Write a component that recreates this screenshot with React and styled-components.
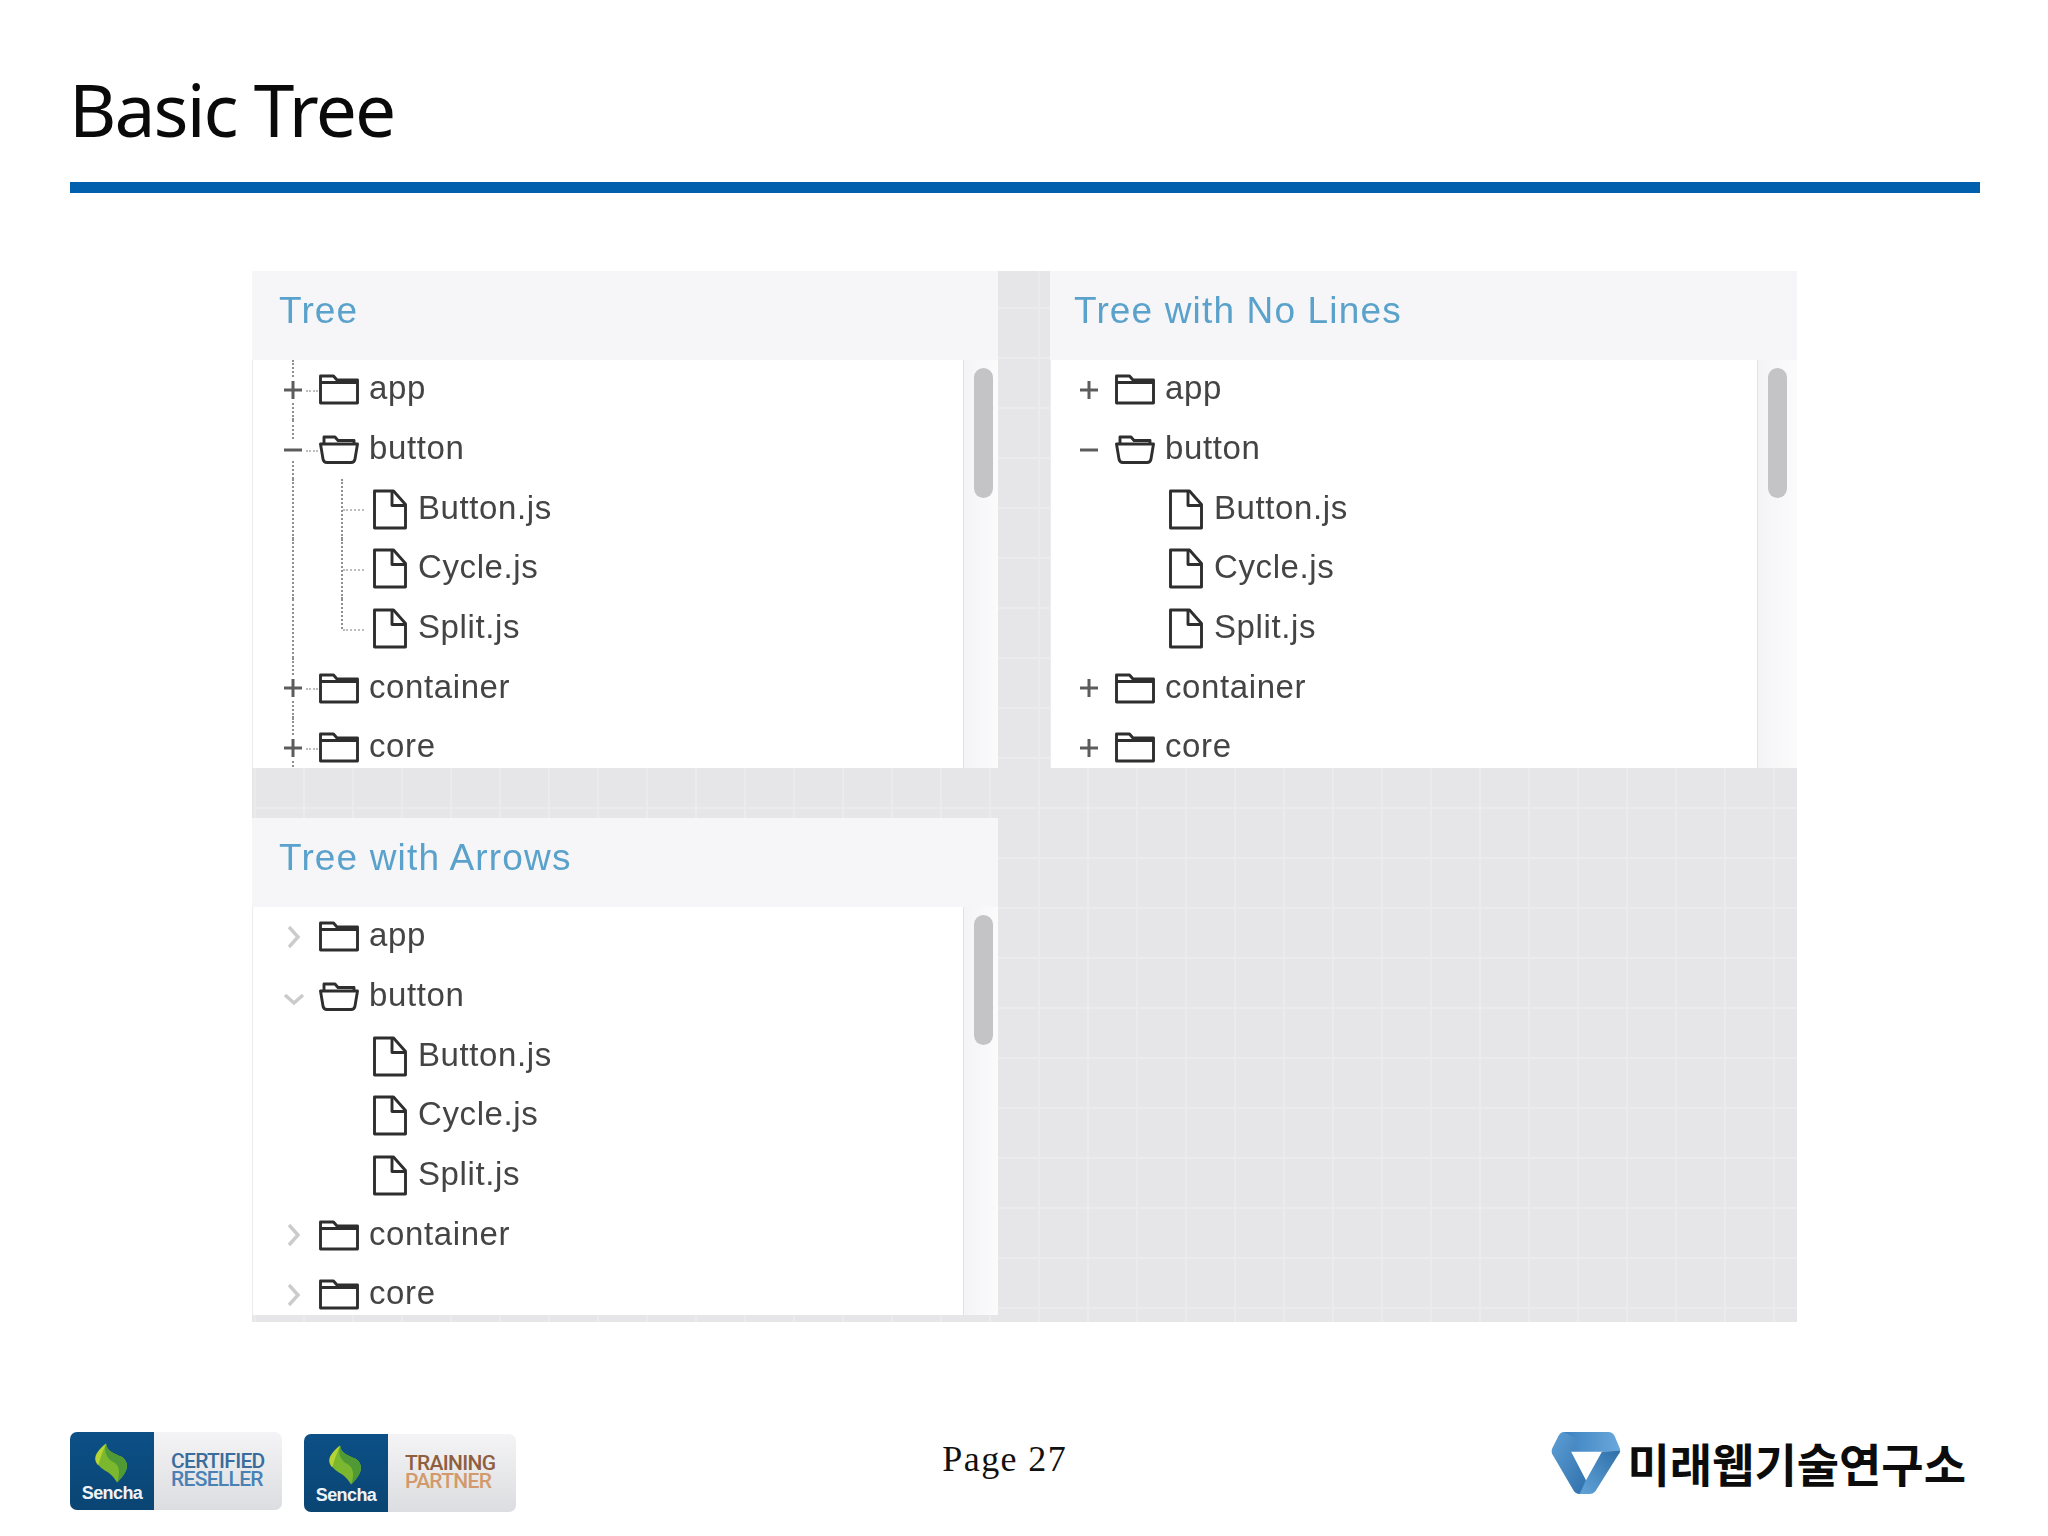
import React from "react";
import styled, { createGlobalStyle } from "styled-components";

const GlobalStyle = createGlobalStyle`
    html, body {
        margin: 0;
        padding: 0;
        background: #fff;
    }
`;

const ROW_HEIGHT = 59.7;

const nodes = [
    { name: "app", type: "folder" },
    { name: "button", type: "open" },
    { name: "Button.js", type: "file", branch: "first" },
    { name: "Cycle.js", type: "file", branch: "middle" },
    { name: "Split.js", type: "file", branch: "last" },
    { name: "container", type: "folder" },
    { name: "core", type: "folder" },
];

const FolderIcon = () => (
    <svg width="40" height="31" viewBox="0 0 40 31" fill="none" stroke="#2e2e2e" strokeWidth="2.900" strokeLinejoin="round">
        <path d="M1.500 29V2h13l3.500 4h20.500V29z" />
        <path d="M1.500 8.500h37" />
    </svg>
);

const OpenFolderIcon = () => (
    <svg width="40" height="31" viewBox="0 0 40 31" fill="none" stroke="#2e2e2e" strokeWidth="2.900" strokeLinejoin="round">
        <path d="M5 10V3h11l3 3.500h16V10" />
        <path d="M1.500 10h37l-2.500 15q-.5 3.500-4 3.500H8q-3.500 0-4-3.500z" />
    </svg>
);

const FileIcon = () => (
    <svg width="36" height="41" viewBox="0 0 36 41" fill="none" stroke="#2e2e2e" strokeWidth="2.900" strokeLinejoin="round">
        <path d="M2.500 2h19L33.500 15.500V39H2.500z" />
        <path d="M20 2v14.500h13.500" />
    </svg>
);

const Toggle = ({ variant, open }) => {
    if (variant === "arrows") {
        return (
            <svg width="24" height="26" viewBox="0 0 24 26" fill="none" stroke="#cbcbcb" strokeWidth="3.400">
                <path d={open ? "M3 11l9 8 9-8" : "M7 3l9 10-9 10"} />
            </svg>
        );
    }
    return (
        <svg width="22" height="22" viewBox="0 0 22 22" fill="none" stroke="#5c5c5c" strokeWidth="3">
            <path d="M2 11h18" />
            {!open && <path d="M11 2v18" />}
        </svg>
    );
};

const Row = ({ node, variant, indent }) => {
    const lines = variant === "lines";
    if (node.type === "file") {
        return (
            <RowBox $indent={indent}>
                <ToggleSlot $trunk={lines} />
                <BranchSlot $branch={lines ? node.branch : null} />
                <FileIcon />
                <FileName>{node.name}</FileName>
            </RowBox>
        );
    }
    const open = node.type === "open";
    return (
        <RowBox $indent={indent}>
            <ToggleSlot $trunk={lines} $stub={lines}>
                <Toggle variant={variant} open={open} />
            </ToggleSlot>
            {open ? <OpenFolderIcon /> : <FolderIcon />}
            <FolderName>{node.name}</FolderName>
        </RowBox>
    );
};

const TreePanel = ({ title, variant, indent = 20, titleInset = 27, trackWidth = 35 }) => (
    <Panel>
        <PanelHeader $inset={titleInset}>{title}</PanelHeader>
        <PanelBody>
            <TreeList>
                {nodes.map((node) => (
                    <Row key={node.name} node={node} variant={variant} indent={indent} />
                ))}
            </TreeList>
            <ScrollTrack $width={trackWidth}>
                <ScrollThumb />
            </ScrollTrack>
        </PanelBody>
    </Panel>
);

const SenchaLeaf = () => (
    <svg width="40" height="46" viewBox="0 0 40 46">
        <path d="M13 0C-2 12-2 24 12 32c8 4 11 9 14 14 12-12 16-22 6-30C24 12 14 10 13 0z" fill="#7cb82f" />
        <path d="M13 0C10 10 14 18 22 22c7 4 8 12 4 24 12-12 16-22 6-30C24 12 14 10 13 0z" fill="#4f9a35" />
        <path d="M13 0C-2 12-2 20 4 26 6 16 10 8 13 0z" fill="#b6d433" />
    </svg>
);

const Badge = ({ first, second, tone, lower }) => (
    <BadgeBox $lower={lower}>
        <BadgeBrand>
            <SenchaLeaf />
            <BadgeBrandName>Sencha</BadgeBrandName>
        </BadgeBrand>
        <BadgeLabel $tone={tone}>
            <span>{first}</span>
            <BadgeSecond $tone={tone}>{second}</BadgeSecond>
        </BadgeLabel>
    </BadgeBox>
);

const BrandMark = () => (
    <svg width="70" height="63" viewBox="0 0 66 64" preserveAspectRatio="none">
        <defs>
            <linearGradient id="markTop" x1="0" y1="0" x2="1" y2="0">
                <stop offset="0" stopColor="#3d82c0" />
                <stop offset="1" stopColor="#6aa8dc" />
            </linearGradient>
            <linearGradient id="markRight" x1="1" y1="0" x2="0" y2="1">
                <stop offset="0" stopColor="#2f6fa8" />
                <stop offset="1" stopColor="#62a4da" />
            </linearGradient>
            <linearGradient id="markLeft" x1="0" y1="0" x2="1" y2="1">
                <stop offset="0" stopColor="#5f9fd6" />
                <stop offset="1" stopColor="#2f70ab" />
            </linearGradient>
        </defs>
        <path d="M12 1h42q4 0 6 4l5 13q1 3-.5 5L61 21H19z" fill="url(#markTop)" />
        <path d="M65 20q0 2-2 5L42 61q-2 3-6 3h-8q-3 0-1-3l6-11 15-29z" fill="url(#markRight)" />
        <path d="M12 1q-3 0-5 4L1 18q-1 3 0 5l20 37q2 4 6 4l6-14L19 21 25 8z" fill="url(#markLeft)" />
    </svg>
);

const App = () => (
    <Page>
        <GlobalStyle />
        <Title>Basic Tree</Title>
        <TitleRule />
        <Board>
            <TreePanel title="Tree" variant="lines" />
            <TreePanel title="Tree with No Lines" variant="plain" indent={18} titleInset={24} trackWidth={40} />
            <TreePanel title="Tree with Arrows" variant="arrows" />
        </Board>
        <Footer>
            <Badges>
                <Badge first="CERTIFIED" second="RESELLER" tone="blue" />
                <Badge first="TRAINING" second="PARTNER" tone="orange" lower />
            </Badges>
            <PageNumber>Page 27</PageNumber>
            <Brand>
                <BrandMark />
                <BrandName>미래웹기술연구소</BrandName>
            </Brand>
        </Footer>
    </Page>
);

export default App;

const Page = styled.div`
    width: 2048px;
    height: 1536px;
    overflow: hidden;
    background: #fff;
    display: flex;
    flex-direction: column;
`;

const Title = styled.h1`
    margin: 0;
    padding: 59px 0 0 69px;
    height: 118px;
    box-sizing: border-box;
    font-family: "Noto Sans", "Open Sans", sans-serif;
    font-size: 73px;
    font-weight: 400;
    line-height: 100px;
    letter-spacing: -1.9px;
    color: #0a0a0a;
`;

const TitleRule = styled.div`
    margin: 64px 68px 0 70px;
    height: 11px;
    background: #0060ae;
`;

const Board = styled.div`
    margin: 78px 0 0 252px;
    width: 1545px;
    height: 1051px;
    display: grid;
    grid-template-columns: 746px 747px;
    grid-template-rows: 497px 504px;
    column-gap: 52px;
    row-gap: 50px;
    background-color: #e6e6e8;
    background-image:
        linear-gradient(#ebebed 2px, transparent 2px),
        linear-gradient(90deg, #ebebed 2px, transparent 2px);
    background-size: 49px 50px;
    background-position: 2px 36px;
`;

const Panel = styled.section`
    display: flex;
    flex-direction: column;
    min-height: 0;
    filter: blur(0.5px);
`;

const PanelHeader = styled.h2`
    margin: 0;
    flex: 0 0 89px;
    padding-left: ${(p) => p.$inset}px;
    background: #f6f6f8;
    font-family: "Liberation Sans", Arial, sans-serif;
    font-size: 37px;
    font-weight: 400;
    line-height: 80px;
    letter-spacing: 1.150px;
    color: #5aa2cb;
`;

const PanelBody = styled.div`
    flex: 0 0 408px;
    display: flex;
    overflow: hidden;
    background: #fff;
`;

const TreeList = styled.div`
    flex: 1;
    min-width: 0;
    overflow: hidden;
    border-left: 1px solid #ececee;
`;

const RowBox = styled.div`
    height: ${ROW_HEIGHT}px;
    display: flex;
    align-items: center;
    padding-left: ${(p) => p.$indent}px;
`;

const ToggleSlot = styled.div`
    position: relative;
    flex: 0 0 46px;
    height: 100%;
    display: flex;
    align-items: center;
    padding-left: 9px;
    box-sizing: border-box;
    &::before {
        content: ${(p) => (p.$trunk ? '""' : "none")};
        position: absolute;
        left: 19px;
        top: 0;
        bottom: 0;
        border-left: 2px dotted #8f8f8f;
    }
    &::after {
        content: ${(p) => (p.$stub ? '""' : "none")};
        position: absolute;
        left: 33px;
        right: 1px;
        top: 50%;
        border-top: 2px dotted #bdbdbd;
    }
    svg {
        position: relative;
        z-index: 1;
        background: #fff;
    }
`;

const BranchSlot = styled.div`
    position: relative;
    flex: 0 0 53px;
    height: 100%;
    &::before {
        content: ${(p) => (p.$branch ? '""' : "none")};
        position: absolute;
        left: 22px;
        top: 0;
        bottom: ${(p) => (p.$branch === "last" ? "50%" : "0")};
        border-left: 2px dotted #8f8f8f;
    }
    &::after {
        content: ${(p) => (p.$branch ? '""' : "none")};
        position: absolute;
        left: 24px;
        right: 8px;
        top: 50%;
        border-top: 2px dotted #bdbdbd;
    }
`;

const FolderName = styled.span`
    margin-left: 10px;
    padding-bottom: 3px;
    font-family: "Liberation Sans", Arial, sans-serif;
    font-size: 33px;
    letter-spacing: 0.6px;
    color: #444;
`;

const FileName = styled(FolderName)`
    margin-left: 10px;
`;

const ScrollTrack = styled.div`
    flex: 0 0 ${(p) => p.$width}px;
    padding: 8px 0 0 10px;
    box-sizing: border-box;
    background: linear-gradient(90deg, #f4f4f6, #fbfbfc);
    border-left: 1px solid #e2e2e4;
`;

const ScrollThumb = styled.div`
    width: 19px;
    height: 130px;
    border-radius: 10px;
    background: #c4c4c6;
`;

const Footer = styled.footer`
    margin-top: 110px;
    padding: 0 82px 0 70px;
    display: flex;
    justify-content: space-between;
    align-items: flex-start;
`;

const Badges = styled.div`
    display: flex;
    gap: 22px;
`;

const BadgeBox = styled.div`
    width: 212px;
    height: 78px;
    margin-top: ${(p) => (p.$lower ? "2px" : "0")};
    border-radius: 7px;
    overflow: hidden;
    display: flex;
    background: linear-gradient(#f4f4f6, #dcdde0);
`;

const BadgeBrand = styled.div`
    flex: 0 0 84px;
    background: linear-gradient(#0c5087, #0a4573);
    display: flex;
    flex-direction: column;
    align-items: center;
    padding-top: 9px;
    box-sizing: border-box;
    svg {
        width: 34px;
        height: 44px;
    }
`;

const BadgeBrandName = styled.span`
    margin-top: -2px;
    font-family: "Liberation Sans", Arial, sans-serif;
    font-size: 18px;
    font-weight: 700;
    letter-spacing: -0.6px;
    color: #eef3f7;
`;

const BadgeLabel = styled.div`
    flex: 1;
    display: flex;
    flex-direction: column;
    justify-content: center;
    padding: 0 0 2px 17px;
    font-family: "Roboto", "Liberation Sans", sans-serif;
    font-size: 21px;
    font-weight: 500;
    line-height: 18px;
    letter-spacing: -0.7px;
    color: ${(p) => (p.$tone === "blue" ? "#3a6c9c" : "#8f5e3f")};
`;

const BadgeSecond = styled.span`
    color: ${(p) => (p.$tone === "blue" ? "#4a81b4" : "#d29a6c")};
`;

const PageNumber = styled.div`
    margin: 5px 58px 0 0;
    font-family: "Liberation Serif", "Times New Roman", serif;
    font-size: 36px;
    line-height: 44px;
    letter-spacing: 1.4px;
    color: #111;
`;

const Brand = styled.div`
    display: flex;
    align-items: center;
    gap: 6px;
    margin-top: -2px;
`;

const BrandName = styled.span`
    font-family: "Noto Sans CJK KR", sans-serif;
    font-size: 46px;
    font-weight: 700;
    line-height: 64px;
    color: #0c0c0c;
`;
